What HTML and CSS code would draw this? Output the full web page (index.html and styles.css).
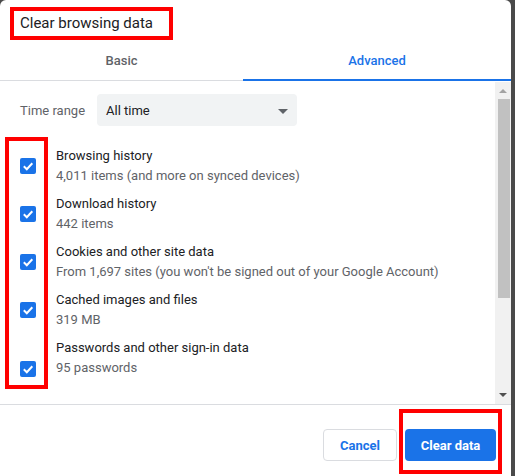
FILE: index.html
```html
<!DOCTYPE html>
<html lang="en">
<head>
<meta charset="utf-8">
<title>Clear browsing data</title>
<link rel="stylesheet" href="styles.css">
</head>
<body>
<div class="dialog">
  <div class="title-wrap">
    <div class="title-box">Clear browsing data</div>
  </div>
  <div class="tabs">
    <div class="tab tab-basic">Basic</div>
    <div class="tab tab-advanced">Advanced</div>
  </div>
  <div class="body">
    <div class="content">
      <div class="range-row">
        <span class="range-label">Time range</span>
        <div class="select">
          <span>All time</span>
          <span class="select-arrow"></span>
        </div>
      </div>
      <div class="items">
        <div class="item">
          <span class="cb"><svg viewBox="0 0 16 16" width="16" height="16"><polyline points="3.8,8.3 6.8,11.2 12.3,5.2" fill="none" stroke="#fff" stroke-width="2"/></svg></span>
          <div class="item-text"><div class="item-label">Browsing history</div><div class="item-sub">4,011 items (and more on synced devices)</div></div>
        </div>
        <div class="item">
          <span class="cb"><svg viewBox="0 0 16 16" width="16" height="16"><polyline points="3.8,8.3 6.8,11.2 12.3,5.2" fill="none" stroke="#fff" stroke-width="2"/></svg></span>
          <div class="item-text"><div class="item-label">Download history</div><div class="item-sub">442 items</div></div>
        </div>
        <div class="item">
          <span class="cb"><svg viewBox="0 0 16 16" width="16" height="16"><polyline points="3.8,8.3 6.8,11.2 12.3,5.2" fill="none" stroke="#fff" stroke-width="2"/></svg></span>
          <div class="item-text"><div class="item-label">Cookies and other site data</div><div class="item-sub">From 1,697 sites (you won't be signed out of your Google Account)</div></div>
        </div>
        <div class="item">
          <span class="cb"><svg viewBox="0 0 16 16" width="16" height="16"><polyline points="3.8,8.3 6.8,11.2 12.3,5.2" fill="none" stroke="#fff" stroke-width="2"/></svg></span>
          <div class="item-text"><div class="item-label">Cached images and files</div><div class="item-sub">319 MB</div></div>
        </div>
        <div class="item item-last">
          <span class="cb"><svg viewBox="0 0 16 16" width="16" height="16"><polyline points="3.8,8.3 6.8,11.2 12.3,5.2" fill="none" stroke="#fff" stroke-width="2"/></svg></span>
          <div class="item-text"><div class="item-label">Passwords and other sign-in data</div><div class="item-sub">95 passwords</div></div>
        </div>
      </div>
      <div class="mark-checks"></div>
    </div>
    <div class="scrollbar">
      <span class="arrow-up"></span>
      <div class="thumb"></div>
      <div class="track-fill"></div>
      <span class="arrow-down"></span>
    </div>
  </div>
  <div class="footer">
    <button class="btn btn-cancel">Cancel</button>
    <button class="btn btn-clear">Clear data</button>
    <div class="mark-clear"></div>
  </div>
</div>
</body>
</html>
```
FILE: styles.css
```css
html, body {
  margin: 0;
  padding: 0;
}
body {
  background: #4a4a4a;
  width: 515px;
  height: 476px;
  overflow: hidden;
  font-family: Roboto, "Liberation Sans", sans-serif;
}
.dialog {
  width: 511px;
  height: 476px;
  background: #fff;
  border-radius: 6px 6px 0 0;
  display: flex;
  flex-direction: column;
  overflow: hidden;
}
.title-wrap {
  padding: 7px 0 0 10px;
  height: 33px;
}
.title-box {
  box-sizing: border-box;
  width: 163px;
  height: 33px;
  border: 4px solid #ff0000;
  padding-left: 6px;
  font-size: 15px;
  line-height: 24px;
  color: #202124;
  white-space: nowrap;
}
.tabs {
  display: flex;
  height: 41px;
}
.tab {
  box-sizing: border-box;
  height: 41px;
  display: flex;
  align-items: center;
  justify-content: center;
  font-size: 13px;
  font-weight: 500;
  padding-top: 0;
}
.tab-basic {
  width: 243px;
  color: #5f6368;
  border-bottom: 1px solid #dadce0;
}
.tab-advanced {
  flex: 1;
  color: #1a73e8;
  border-bottom: 2px solid #1a73e8;
  padding-top: 1px;
}
.body {
  display: flex;
  height: 323px;
  border-bottom: 1px solid #dadce0;
}
.content {
  flex: 1;
  position: relative;
  overflow: hidden;
  padding-top: 13px;
}
.range-row {
  display: flex;
  align-items: center;
  padding-left: 20px;
}
.range-label {
  font-size: 13px;
  color: #5f6368;
  width: 77px;
}
.select {
  box-sizing: border-box;
  width: 200px;
  height: 32px;
  background: #f1f3f4;
  border-radius: 4px;
  display: flex;
  align-items: center;
  justify-content: space-between;
  padding: 0 9px 0 9px;
  font-size: 13px;
  color: #202124;
}
.select-arrow {
  width: 0;
  height: 0;
  border-left: 5px solid transparent;
  border-right: 5px solid transparent;
  border-top: 5px solid #5f6368;
  margin-top: 2px;
}
.items {
  padding-top: 20px;
  display: flex;
  flex-direction: column;
  gap: 8px;
}
.item {
  display: flex;
  align-items: center;
  padding-left: 20px;
  height: 40px;
}
.item-last .cb {
  align-self: flex-end;
  margin-bottom: 1px;
}
.cb {
  width: 16px;
  height: 16px;
  background: #1a73e8;
  border-radius: 2px;
  flex: none;
  margin-right: 20px;
  display: block;
}
.cb svg {
  display: block;
}
.item-text {
  font-size: 13px;
  line-height: 20px;
  white-space: nowrap;
}
.item-label {
  color: #202124;
}
.item-sub {
  color: #5f6368;
}
.mark-checks {
  position: absolute;
  left: 5px;
  top: 56px;
  width: 43px;
  height: 252px;
  box-sizing: border-box;
  border: 4px solid #ff0000;
}
.scrollbar {
  width: 16px;
  background: #f1f1f1;
  display: flex;
  flex-direction: column;
  align-items: center;
  margin-top: 1px;
}
.arrow-up {
  width: 0;
  height: 0;
  border-left: 4px solid transparent;
  border-right: 4px solid transparent;
  border-bottom: 4px solid #a3a3a3;
  margin-top: 7px;
  margin-bottom: 6px;
}
.thumb {
  width: 12px;
  height: 199px;
  background: #c1c1c1;
  margin-left: 1px;
}
.track-fill {
  flex: 1;
}
.arrow-down {
  width: 0;
  height: 0;
  border-left: 4px solid transparent;
  border-right: 4px solid transparent;
  border-top: 4px solid #505050;
  margin-bottom: 7px;
}
.footer {
  position: relative;
  display: flex;
  justify-content: flex-end;
  gap: 8px;
  padding: 24px 15px 0 0;
}
.btn {
  box-sizing: border-box;
  height: 32px;
  border-radius: 4px;
  font-family: Roboto, "Liberation Sans", sans-serif;
  font-size: 13px;
  font-weight: 700;
  padding: 0;
  cursor: pointer;
}
.btn-cancel {
  width: 74px;
  background: #fff;
  color: #1a73e8;
  border: 1px solid #dadce0;
}
.btn-clear {
  width: 91px;
  background: #1a73e8;
  color: #fff;
  border: none;
}
.mark-clear {
  position: absolute;
  left: 399px;
  top: 4px;
  width: 103px;
  height: 65px;
  box-sizing: border-box;
  border: 4px solid #ff0000;
}
```
